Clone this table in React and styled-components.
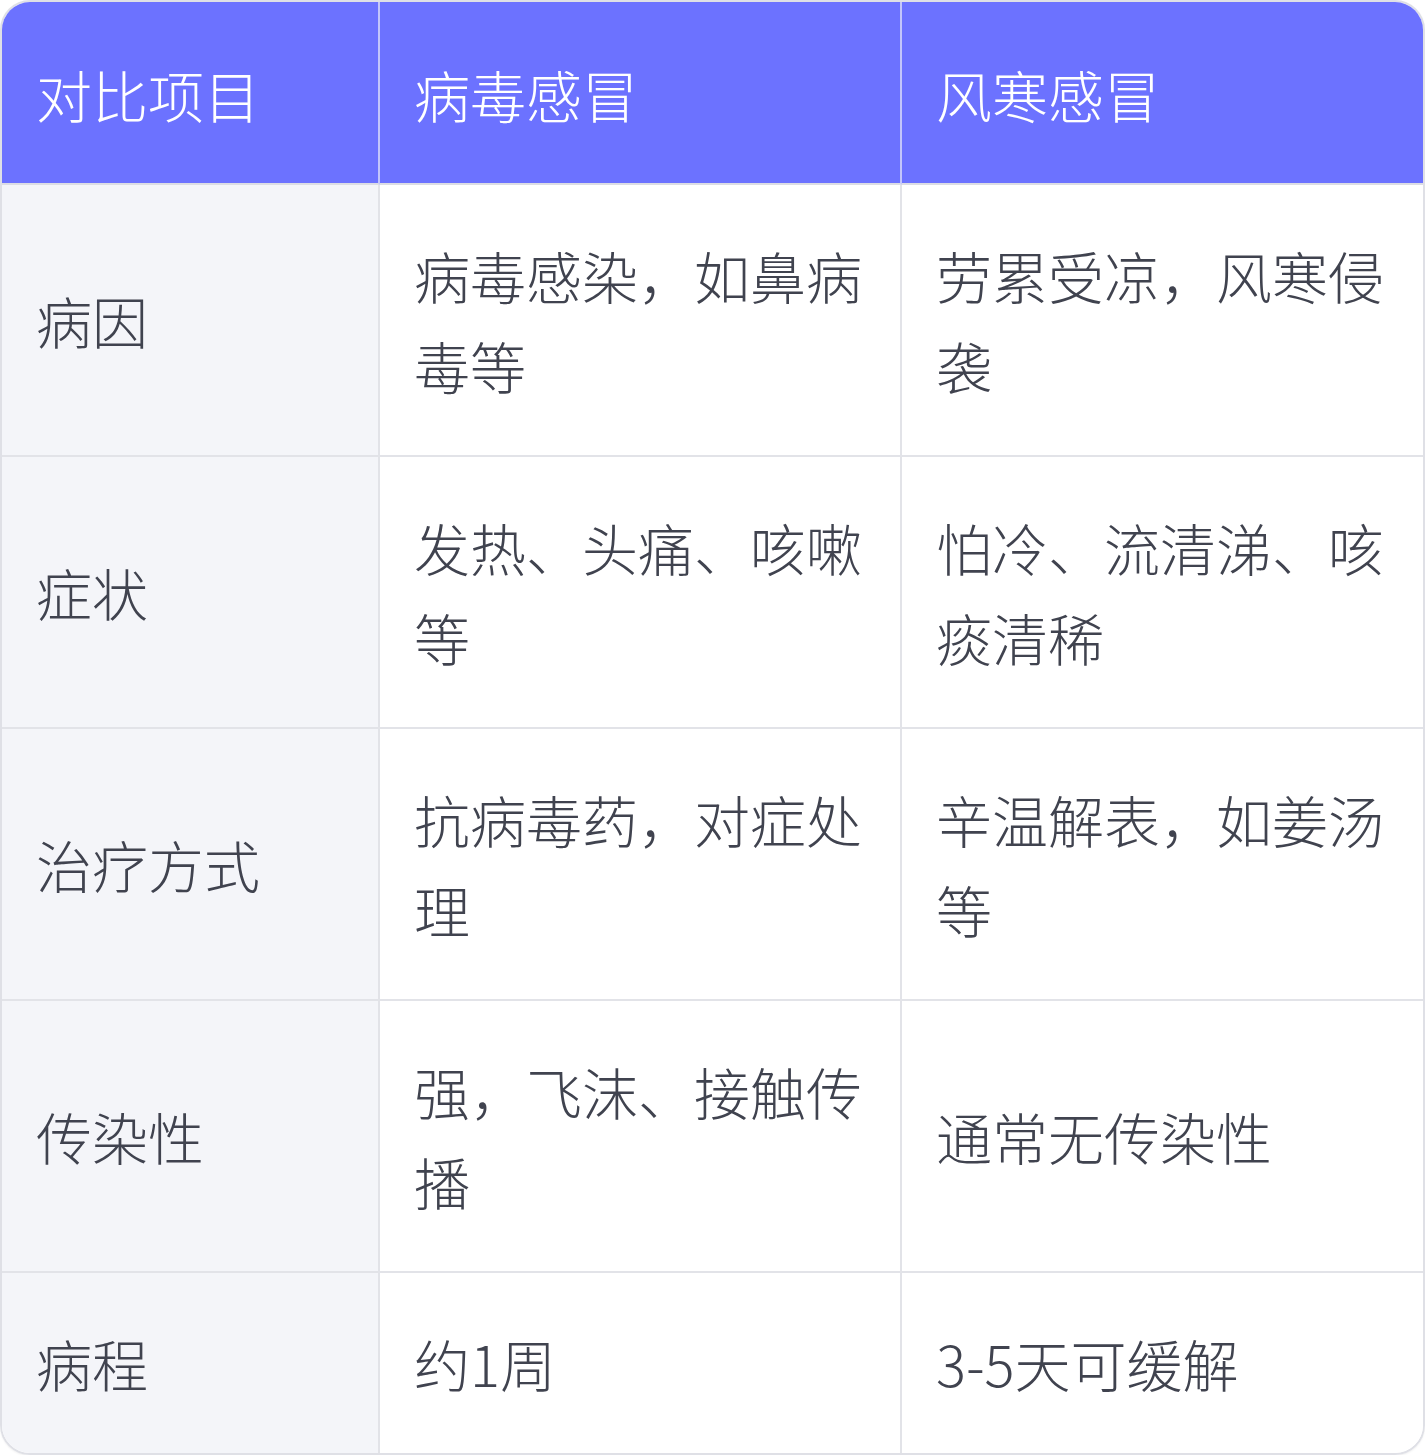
import React from 'react'
import styled, { createGlobalStyle } from 'styled-components'

const GlobalStyle = createGlobalStyle`
  html, body {
    margin: 0;
    padding: 0;
    background: #ffffff;
  }
  body {
    font-family: "Noto Sans CJK SC", "Noto Sans", sans-serif;
  }
`

const columns = ['对比项目', '病毒感冒', '风寒感冒']

const rows = [
  ['病因', '病毒感染，如鼻病毒等', '劳累受凉，风寒侵袭'],
  ['症状', '发热、头痛、咳嗽等', '怕冷、流清涕、咳痰清稀'],
  ['治疗方式', '抗病毒药，对症处理', '辛温解表，如姜汤等'],
  ['传染性', '强，飞沫、接触传播', '通常无传染性'],
  ['病程', '约1周', '3-5天可缓解'],
]

// cell widths include their right border, so 378 + 522 + rest
const Table = styled.div`
  box-sizing: border-box;
  width: 1425px;
  display: grid;
  grid-template-columns: 378px 522px 1fr;
  border: 2px solid #dfe0e6;
  border-radius: 30px;
  overflow: hidden;
  box-shadow: 0 1px 2px rgba(0, 0, 0, 0.06);
`

const HeadCell = styled.div`
  box-sizing: border-box;
  background: #6c72ff;
  color: #ffffff;
  font-size: 56px;
  font-weight: 300;
  line-height: 90px;
  padding: 47px 30px 44px 34px;
  border-bottom: 2px solid #dcdde4;
  border-right: ${p => (p.$last ? 'none' : '2px solid #c3c5fb')};
  white-space: nowrap;
`

const Cell = styled.div`
  box-sizing: border-box;
  display: flex;
  align-items: center;
  min-height: ${p => (p.$short ? '180px' : '272px')};
  padding: 45px 28px 45px 34px;
  background: ${p => (p.$label ? '#f4f5f9' : '#ffffff')};
  color: #40434f;
  font-size: 56px;
  font-weight: 300;
  line-height: 90px;
  border-right: ${p => (p.$last ? 'none' : '2px solid #e2e3e8')};
  border-bottom: ${p => (p.$bottom ? 'none' : '2px solid #e2e3e8')};
`

export default function App() {
  return (
    <>
      <GlobalStyle />
      <Table>
        {columns.map((c, i) => (
          <HeadCell key={c} $last={i === columns.length - 1}>
            {c}
          </HeadCell>
        ))}
        {rows.map((r, ri) =>
          r.map((v, ci) => (
            <Cell
              key={ri + '-' + ci}
              $label={ci === 0}
              $last={ci === r.length - 1}
              $bottom={ri === rows.length - 1}
              $short={ri === rows.length - 1}
            >
              {v}
            </Cell>
          ))
        )}
      </Table>
    </>
  )
}
